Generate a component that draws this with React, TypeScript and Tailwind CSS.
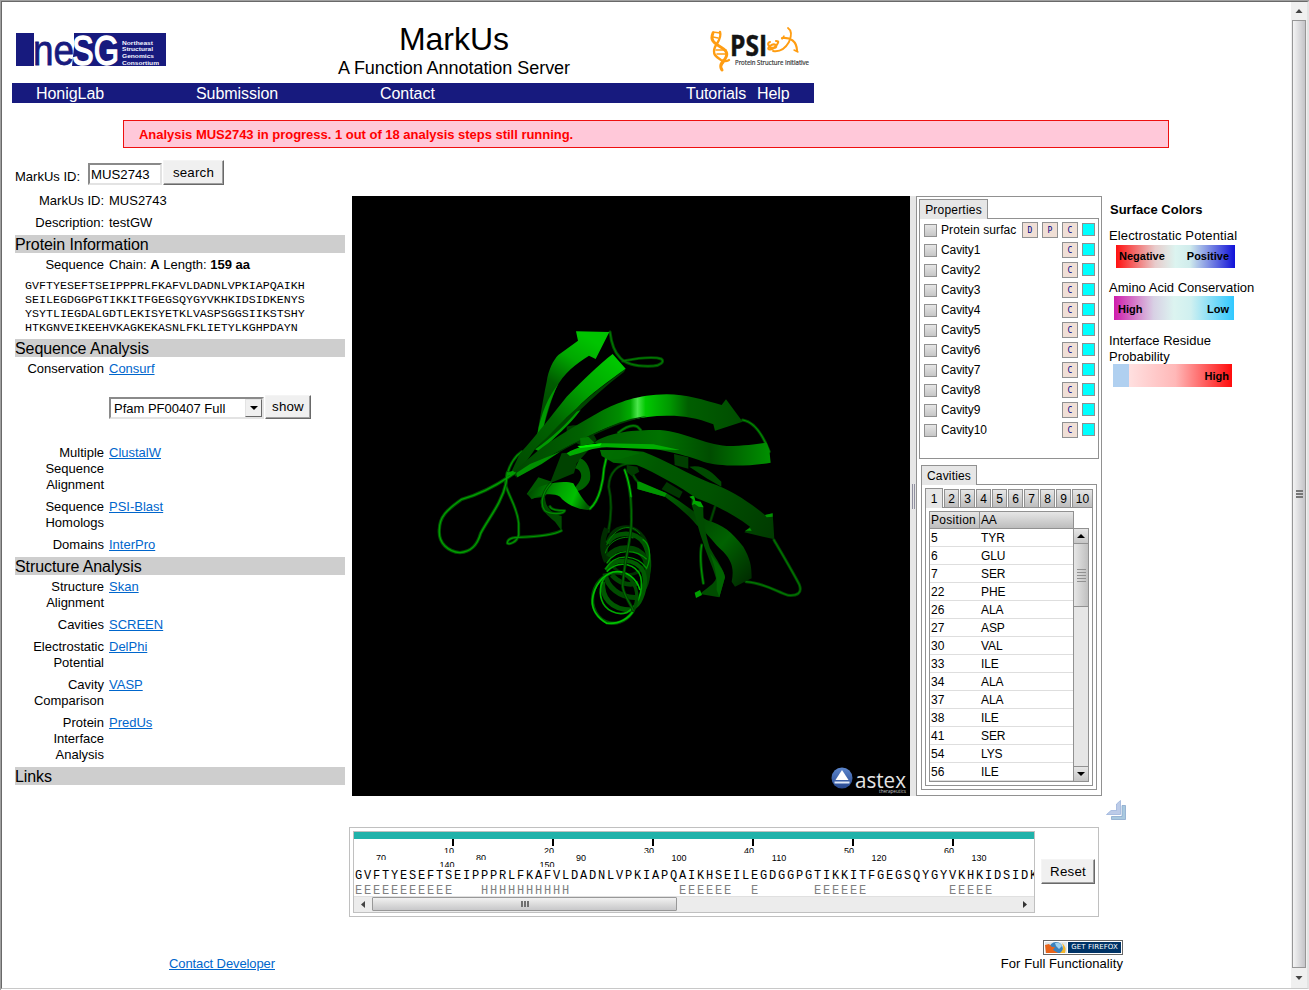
import React from "react";

const cavities = Array.from({ length: 10 }, (_, i) => i + 1);

const residues: [number, string][] = [
  [5, "TYR"], [6, "GLU"], [7, "SER"], [22, "PHE"], [26, "ALA"], [27, "ASP"], [30, "VAL"],
  [33, "ILE"], [34, "ALA"], [37, "ALA"], [38, "ILE"], [41, "SER"], [54, "LYS"], [56, "ILE"],
];

const SEQUENCE = "GVFTYESEFTSEIPPPRLFKAFVLDADNLVPKIAPQAIKHSEILEGDGGPGTIKKITFGEGSQYGYVKHKIDSIDK";
const SECONDARY =
  "E".repeat(11) + " ".repeat(3) + "H".repeat(10) + " ".repeat(12) + "E".repeat(6) + " ".repeat(2) +
  "E" + " ".repeat(6) + "E".repeat(6) + " ".repeat(9) + "E".repeat(5);

function Heading({ children }: { children: React.ReactNode }) {
  return <h2 className="h-[18px] bg-[#cecece] text-[16px] leading-[19px] tracking-[-0.08px]">{children}</h2>;
}

function Row({ label, children }: { label: string[]; children: React.ReactNode }) {
  return (
    <div className="flex gap-[5px] pt-1 pb-[2px] leading-4">
      <div className="w-[89px] text-right">
        {label.map((l) => (
          <div key={l} className="whitespace-nowrap">{l}</div>
        ))}
      </div>
      <div>{children}</div>
    </div>
  );
}

function Link({ children }: { children: React.ReactNode }) {
  return <a className="text-[#0066cc] underline">{children}</a>;
}

function Button({ children, className }: { children: React.ReactNode; className: string }) {
  return (
    <button
      className={
        "border border-t-[#f4f4f4] border-l-[#f4f4f4] border-r-[#696969] border-b-[#696969] bg-[#f0f0f0] text-[13.33px] tracking-[0.2px] shadow-[inset_-1px_-1px_0_#a0a0a0] " +
        className
      }
    >
      {children}
    </button>
  );
}

function NesgLogo() {
  return (
    <svg width="150" height="33" viewBox="0 0 150 33" className="block">
      <rect width="150" height="33" fill="#171a7e" />
      <path d="M18 0H58V14L56 33H18Z" fill="#fff" />
      <g fontFamily="Liberation Sans, sans-serif">
        <text x="17" y="32" fontSize="43" fill="#171a7e" stroke="#171a7e" strokeWidth="0.8" textLength="41" lengthAdjust="spacingAndGlyphs">ne</text>
        <text x="56" y="31.5" fontSize="43" fill="#fff" stroke="#fff" strokeWidth="1.4" textLength="47" lengthAdjust="spacingAndGlyphs">SG</text>
      </g>
      <g fontFamily="Liberation Sans, sans-serif" fontSize="6" fontWeight="bold" fill="#f4f4ff">
        <text x="106" y="11.5" textLength="31" lengthAdjust="spacingAndGlyphs">Northeast</text>
        <text x="106" y="18.3" textLength="31" lengthAdjust="spacingAndGlyphs">Structural</text>
        <text x="106" y="25" textLength="32" lengthAdjust="spacingAndGlyphs">Genomics</text>
        <text x="106" y="31.7" textLength="37" lengthAdjust="spacingAndGlyphs">Consortium</text>
      </g>
    </svg>
  );
}

function PsiLogo() {
  return (
    <svg width="102" height="48" viewBox="708 26 102 48" className="block">
      <g fill="none" stroke="#ff9d12" strokeLinecap="round">
        <path d="M713 33C710 40 714 43 719 46C726 50 729 53 725 59C722 62 719 65 722 70" strokeWidth="3" />
        <path d="M720 32C722 38 717 43 715 47C712 54 716 57 721 60C726 62 728 61 729 60" strokeWidth="2.4" />
        <path d="M713 32L720 33M713 37L718 38M716 50L726 50M717 54L726 54M721 66L724 62" strokeWidth="1.5" />
        <path d="M770 42C766 43 769 48 774 48C779 47 775 42 770 46C765 50 772 51 776 46C779 42 779 41 776 41" strokeWidth="2.1" />
        <path d="M788 28C791 30 792 35 789 42C785 49 779 52 773 51" strokeWidth="1.9" />
        <path d="M782 38C790 37 797 41 797 51" strokeWidth="2.2" />
        <path d="M782 39L784 36M794 50L798 52" strokeWidth="1.4" />
      </g>
      <text x="730" y="56" fontFamily="Open Sans, sans-serif" fontSize="28" fontWeight="bold" fill="#141414" stroke="#141414" strokeWidth="0.5" textLength="37" lengthAdjust="spacingAndGlyphs">PSI</text>
      <text x="735" y="64.500" fontFamily="Open Sans, sans-serif" fontSize="7" fill="#333" stroke="#333" strokeWidth="0.2" textLength="74" lengthAdjust="spacingAndGlyphs">Protein Structure Initiative</text>
    </svg>
  );
}

function Tube({ d, w = 9, dark = "#004a00", light = "#009400" }: { d: string; w?: number; dark?: string; light?: string }) {
  return (
    <g fill="none" strokeLinecap="round" strokeLinejoin="round">
      <path d={d} stroke={dark} strokeWidth={w} />
      <path d={d} stroke={light} strokeWidth={w * 0.4} />
    </g>
  );
}

function Molecule() {
  return (
    <svg width="558" height="600" viewBox="352 196 558 600" className="block">
      <defs>
        <linearGradient id="s1" gradientUnits="userSpaceOnUse" x1="360" y1="300" x2="500" y2="80">
          <stop offset="0" stopColor="#004a00" /><stop offset=".35" stopColor="#005c00" /><stop offset=".7" stopColor="#00a800" /><stop offset="1" stopColor="#00c400" />
        </linearGradient>
        <linearGradient id="s2" gradientUnits="userSpaceOnUse" x1="300" y1="470" x2="590" y2="150">
          <stop offset="0" stopColor="#004c00" /><stop offset=".4" stopColor="#006400" /><stop offset=".7" stopColor="#00a400" /><stop offset="1" stopColor="#00c800" />
        </linearGradient>
        <linearGradient id="s3" gradientUnits="userSpaceOnUse" x1="280" y1="0" x2="970" y2="0">
          <stop offset="0" stopColor="#004600" /><stop offset=".3" stopColor="#006200" /><stop offset=".46" stopColor="#008c00" /><stop offset=".51" stopColor="#00ac00" /><stop offset=".54" stopColor="#4be64b" /><stop offset=".575" stopColor="#00c800" /><stop offset=".68" stopColor="#009800" /><stop offset=".76" stopColor="#005e00" /><stop offset="1" stopColor="#004c00" />
        </linearGradient>
        <linearGradient id="s4" gradientUnits="userSpaceOnUse" x1="540" y1="0" x2="1050" y2="0">
          <stop offset="0" stopColor="#005c00" /><stop offset=".35" stopColor="#007200" /><stop offset=".65" stopColor="#004c00" /><stop offset="1" stopColor="#009000" />
        </linearGradient>
        <linearGradient id="s5" gradientUnits="userSpaceOnUse" x1="0" y1="240" x2="522" y2="500">
          <stop offset="0" stopColor="#007000" /><stop offset=".3" stopColor="#005800" /><stop offset=".6" stopColor="#005200" /><stop offset="1" stopColor="#003a00" />
        </linearGradient>
        <linearGradient id="s6" gradientUnits="userSpaceOnUse" x1="110" y1="340" x2="440" y2="640">
          <stop offset="0" stopColor="#008000" /><stop offset=".4" stopColor="#004000" /><stop offset=".7" stopColor="#006200" /><stop offset="1" stopColor="#002c00" />
        </linearGradient>
        <linearGradient id="hx" gradientUnits="userSpaceOnUse" x1="330" y1="520" x2="500" y2="590">
          <stop offset="0" stopColor="#004400" /><stop offset=".5" stopColor="#00a400" /><stop offset=".75" stopColor="#00c000" /><stop offset="1" stopColor="#005800" />
        </linearGradient>
        <linearGradient id="badge" x1="0" y1="0" x2="0" y2="1">
          <stop offset="0" stopColor="#5c86cc" /><stop offset="1" stopColor="#27488f" />
        </linearGradient>
      </defs>
      <rect x="352" y="196" width="558" height="600" fill="#000" />

      <g transform="translate(420 310) scale(0.33333)">
        {/* loops behind the sheets */}
        <Tube d="M570,66C574,100 582,125 600,143C620,165 660,170 700,168C720,167 735,155 724,147C700,138 645,146 608,153" light="#007a00" />
        <Tube d="M305,425C275,445 262,480 256,520C265,560 292,590 296,640L296,675C290,698 268,704 262,700C262,684 278,682 296,682C350,680 400,676 424,662" />
        <Tube d="M595,368C620,348 640,344 652,350L662,360" light="#008000" />
        <Tube d="M640,460C590,460 568,490 566,530C578,580 574,620 565,665" light="#005800" dark="#003000" />
        <Tube d="M968,330C1000,335 1025,365 1048,425" light="#008c00" />
        <Tube d="M1062,690C1085,730 1115,780 1138,824C1148,850 1130,858 1105,856C1070,845 1030,818 978,815" dark="#004400" light="#007600" />
        <Tube d="M845,705C838,740 845,790 850,820" />
        <Tube d="M885,590L872,632" light="#004c00" dark="#002c00" />
        <Tube d="M635,480C640,505 655,520 670,528" light="#005c00" dark="#003800" />

        {/* inner helix turn */}
        <path d="M440,350C470,340 510,345 530,390L500,415L440,385Z" fill="#003c00" />
        <path d="M425,430L480,425L515,410L470,460L462,490L390,520Z" fill="#004200" />
        <path d="M480,445C500,450 515,480 510,510C500,535 480,545 455,545L475,520C490,500 485,480 465,475Z" fill="#006200" />
        <path d="M355,502L395,515L375,560L340,565L320,552Z" fill="#005a00" />
        <path d="M322,552C360,520 430,510 460,520C475,545 490,575 512,592L505,600C470,598 435,580 420,560C395,545 355,555 335,568Z" fill="url(#hx)" />
        <path d="M375,560C375,590 395,612 425,618L425,662L405,635C385,618 360,600 362,570Z" fill="#004c00" />
        <Tube d="M392,520C365,550 360,585 375,602C395,615 430,612 434,602C415,602 395,600 390,590" light="#008c00" />
        <Tube d="M510,596C540,570 550,510 552,475L560,440" dark="#006400" light="#00c800" />

        {/* strand one */}
        <path d="M468,64L568,66L527,147L507,137C470,160 430,190 408,235C392,275 378,325 368,365L350,380C358,340 368,270 380,215C385,180 400,150 415,135L474,92Z" fill="url(#s1)" />
        <path d="M415,222C385,260 362,310 352,375L368,362C378,315 392,265 415,222Z" fill="#009800" />
        {/* strand two */}
        <path d="M350,415L385,375C440,325 490,270 560,220L617,176L612,186C540,240 470,310 430,350L358,425Z" fill="#004400" />
        <path d="M272,490L300,430C350,375 400,310 440,260C490,210 535,165 578,132L617,176C570,210 510,252 470,295C430,330 395,370 345,418L290,495Z" fill="url(#s2)" />
        <path d="M345,418C400,380 440,340 470,305L482,300C450,345 400,385 360,425Z" fill="#009a00" />
        {/* strand three */}
        <path d="M276,488L350,425C400,385 470,345 540,305C600,275 650,255 740,253C800,253 850,270 905,285L918,268L968,335L885,362L880,343C830,322 780,316 740,317C660,318 600,335 540,362C460,400 380,440 288,500Z" fill="url(#s3)" />
        <path d="M288,500C380,440 460,398 540,362C600,335 640,322 680,319L640,330C590,343 540,366 500,385C420,420 350,470 290,503Z" fill="#003a00" />
        <path d="M288,490L330,462L420,425L365,462L292,502Z" fill="#009000" />
        {/* strand four */}
        <path d="M522,398C560,368 640,358 720,360C800,368 850,402 920,408C980,408 1010,402 1040,398L1048,420L1052,458C980,470 900,470 850,455C780,430 700,408 540,402Z" fill="url(#s4)" />
        <path d="M440,430C470,410 520,398 560,400L700,403L780,420L700,418L560,412C520,412 490,428 450,438Z" fill="#00ae00" />
        <path d="M472,408L545,400L540,408L480,414Z" fill="#00f000" />
        <path d="M480,385L505,380L525,400L482,408Z" fill="#007800" />

        <g transform="translate(540 180)">
          <path d="M222,252L265,262L265,296L224,285Z" fill="#003e00" />
          <path d="M268,290C310,282 335,305 364,335L364,350L320,325Z" fill="#004a00" />
          <path d="M80,285L112,290L118,305L95,318L80,305Z" fill="#003c00" />
          {/* strand six */}
          <path d="M112,335L200,370C240,392 280,425 320,450C370,465 395,485 430,530C450,565 455,585 455,625L405,650L395,635C402,600 398,575 370,545C340,520 330,495 290,465C265,435 235,410 195,380L115,358Z" fill="url(#s6)" />
          <path d="M112,335L120,335L200,370L194,380L112,357Z" fill="#009400" />
          <path d="M200,336L248,365L238,385L185,358Z" fill="#003600" />
          {/* strand seven */}
          <path d="M275,385L310,412C308,460 322,510 330,535C350,570 372,600 375,622L358,682L300,672C320,655 345,640 348,625C335,580 318,550 310,520C295,480 288,440 275,405Z" fill="#004c00" />
          <path d="M330,550C352,580 372,600 375,622L358,682L350,660C352,620 345,590 330,550Z" fill="#006400" />
          <path d="M268,380L282,376L286,392L302,395L311,412L296,410L284,402L276,405L280,390Z" fill="#00a800" />
          <path d="M284,668L300,660L306,675L288,684Z" fill="#00a000" />
          {/* strand five */}
          <path d="M0,240L75,240L130,245C200,272 260,310 330,338C390,358 440,390 495,435L518,430L523,508L433,487L450,470C400,432 350,408 290,385C240,350 170,310 110,285L40,278L5,258Z" fill="url(#s5)" />
          <path d="M0,240L95,242L120,250L60,268L25,268Z" fill="#006e00" opacity=".7" />
          <path d="M495,435L518,430L518,440L500,442ZM435,482L450,474L455,482Z" fill="#009000" />
        </g>

        {/* main helix */}
        <g fill="none">
          <path d="M560,655C545,690 543,720 560,755" stroke="#002c00" strokeWidth="16" />
          <ellipse cx="622" cy="722" rx="62" ry="72" stroke="#003000" strokeWidth="9" transform="rotate(-15 622 722)" />
          <path d="M562,700C590,660 650,665 672,700C690,730 690,780 680,800" stroke="#005400" strokeWidth="14" />
          <path d="M565,740C590,705 655,705 675,745C690,780 680,820 670,835" stroke="#004600" strokeWidth="17" />
          <path d="M558,780C585,740 650,745 670,785C685,830 660,880 645,890" stroke="#005c00" strokeWidth="13" />
          <path d="M555,790C560,830 600,865 650,862" stroke="#004c00" strokeWidth="15" />
          <path d="M575,795C600,820 620,828 655,820" stroke="#004a00" strokeWidth="14" />
          <path d="M548,815C545,860 570,900 635,900" stroke="#005800" strokeWidth="15" />
          <path d="M560,705C585,648 635,638 660,672" stroke="#007600" strokeWidth="3" />
          <path d="M556,730C566,690 610,676 640,684" stroke="#008400" strokeWidth="3" />
          <path d="M556,778C590,720 655,740 680,775C695,740 690,700 668,688M560,760C590,712 650,718 680,748" stroke="#009400" strokeWidth="4" />
          <path d="M560,785C600,745 650,765 662,800C672,850 650,890 620,908C590,918 555,900 545,870C535,840 545,810 560,795" stroke="#00a800" strokeWidth="5" />
          <ellipse cx="584" cy="864" rx="66" ry="76" stroke="#004e00" strokeWidth="10" transform="rotate(12 584 864)" />
          <path d="M642,900C620,935 590,942 560,940C535,925 515,900 517,870C522,825 550,795 580,786C620,780 650,805 660,840" stroke="#00c000" strokeWidth="5" />
        </g>
        <Tube d="M615,480C628,520 635,560 634,620C638,680 612,745 608,830C612,860 632,880 640,902" dark="#003c00" light="#007000" />
        <Tube d="M614,480C624,505 630,535 633,560" dark="#006000" light="#00d000" w={8} />

        {/* left hand loop */}
        <Tube d="M285,488C240,520 190,550 125,568C80,600 58,620 58,660C55,700 85,725 120,728C155,725 172,705 182,670C205,625 245,580 258,520L262,488" dark="#005000" light="#00a000" w={10} />
        <path d="M260,488L280,482L284,492L262,498Z" fill="#009c00" />
      </g>

      <circle cx="842" cy="778" r="10.500" fill="url(#badge)" />
      <path d="M842 770L848.5 780H835.500Z" fill="#fff" />
      <path d="M834.500 782.500H849.500" stroke="#dfe8f8" strokeWidth="2" />
      <text x="855" y="788" fontFamily="Open Sans, sans-serif" fontSize="22.500" fill="#e4e4e4" textLength="51" lengthAdjust="spacingAndGlyphs">astex</text>
      <text x="879" y="793" fontFamily="Open Sans, sans-serif" fontSize="5" fill="#c4c4c4" textLength="27" lengthAdjust="spacingAndGlyphs">therapeutics</text>
    </svg>
  );
}

function Square({ children }: { children: string }) {
  return (
    <span className="flex h-4 w-4 items-center justify-center border border-[#919191] bg-[#f0dfd6] pt-[2px] font-['DejaVu_Sans_Mono',monospace] text-[8px] leading-none text-[#000080]">
      {children}
    </span>
  );
}

function PropertyRow({ name, extra }: { name: string; extra?: boolean }) {
  return (
    <div className="flex h-5 items-center pr-[3px] pl-1">
      <span className="mt-px h-[13px] w-[13px] border border-[#919191] bg-linear-to-b from-[#e6e6e6] to-[#c6c6c6]" />
      <span className={"ml-1 flex-1 overflow-hidden text-[12px] whitespace-nowrap " + (extra ? "tracking-[0.1px]" : "tracking-[-0.1px]")}>{name}</span>
      <span className="mr-1 flex gap-1">
        {extra && <Square>D</Square>}
        {extra && <Square>P</Square>}
        <Square>C</Square>
      </span>
      <span className="mb-px h-[13px] w-[13px] border border-[#919191] bg-[#00ffff]" />
    </div>
  );
}

function PropertiesPanel() {
  return (
    <section className="h-[261px]">
      <div className="relative z-10 flex h-5 w-[69px] items-center justify-center border border-b-0 border-[#919191] bg-[#e6e6e6] text-[12px] tracking-[0.2px]">
        Properties
      </div>
      <div className="-mt-px h-[241px] w-[180px] border border-[#919191] bg-white pt-px">
        <PropertyRow name="Protein surfac" extra />
        {cavities.map((n) => (
          <PropertyRow key={n} name={"Cavity" + n} />
        ))}
      </div>
    </section>
  );
}

function Arrow({ up }: { up?: boolean }) {
  return (
    <svg width="8" height="4" viewBox="0 0 8 4">
      <path d={up ? "M0 4L4 0L8 4Z" : "M0 0L4 4L8 0Z"} fill="#000" />
    </svg>
  );
}

function CavitiesPanel() {
  return (
    <section className="pt-[5px] text-[12px]">
      <div className="relative z-10 ml-[2px] flex h-5 w-[56px] items-center justify-center border border-b-0 border-[#919191] bg-[#e6e6e6] tracking-[0.15px]">
        Cavities
      </div>
      <div className="-mt-px ml-[2px] h-[306px] w-[176px] border border-[#919191] px-[3px] pt-[3px]">
        <div className="flex h-[20px] w-[168px] gap-px">
          {cavities.map((n) => (
            <span
              key={n}
              className={
                "flex shrink-0 items-center justify-center border border-[#919191] " +
                (n === 1
                  ? "h-[20px] w-[18px] border-b-0 bg-[#e6e6e6]"
                  : n === 10
                    ? "mt-px h-[19px] w-[21px] bg-linear-to-b from-[#e6e6e6] to-[#bdbdbd]"
                    : "mt-px h-[19px] w-[15px] bg-linear-to-b from-[#e6e6e6] to-[#bdbdbd]")
              }
            >
              {n}
            </span>
          ))}
        </div>
        <div className="-mt-px h-[279px] w-[168px] border border-[#919191] px-[3px] pt-[3px]">
          <div className="flex h-[18px] w-[145px] border border-[#919191] bg-linear-to-b from-[#e6e6e6] to-[#bdbdbd] leading-[17px]">
            <span className="w-[50px] border-r border-[#919191] pl-px tracking-[0.3px]">Position</span>
            <span className="pl-px tracking-[-0.3px]">AA</span>
          </div>
          <div className="-mt-px flex h-[254px] w-[160px] border border-[#919191]">
            <div className="flex-1 overflow-hidden">
              {residues.map(([pos, aa]) => (
                <div key={pos} className="flex h-[18px] border-b border-[#dedede] leading-[18px]">
                  <span className="w-[50px] pl-px">{pos}</span>
                  <span className="pl-px tracking-[-0.1px]">{aa}</span>
                </div>
              ))}
            </div>
            <div className="flex w-[15px] flex-col border-l border-[#919191] bg-[#e6e6e6]">
              <span className="flex h-[15px] items-center justify-center border-b border-[#919191] bg-linear-to-b from-[#e6e6e6] to-[#c6c6c6]">
                <Arrow up />
              </span>
              <span className="flex h-[63px] flex-col items-center justify-center gap-[2px] border-b border-[#919191] bg-linear-to-r from-[#e6e6e6] to-[#c0c0c0]">
                {[0, 1, 2, 3, 4].map((i) => (
                  <i key={i} className="h-px w-[9px] bg-[#919191]" />
                ))}
              </span>
              <span className="mt-auto flex h-[15px] items-center justify-center border-t border-[#919191] bg-linear-to-b from-[#e6e6e6] to-[#c6c6c6]">
                <Arrow />
              </span>
            </div>
          </div>
        </div>
      </div>
    </section>
  );
}

function SurfaceColors() {
  return (
    <aside className="ml-[7px] w-[160px] pt-[5px] text-[13px]">
      <h3 className="ml-px h-[27px] leading-[18px] font-bold">Surface Colors</h3>
      <p className="h-[17px] leading-4 tracking-[0.14px]">Electrostatic Potential</p>
      <div className="ml-[7px] flex h-[23px] w-[119px] items-center justify-between bg-[linear-gradient(90deg,#ff1010,#e8cccc_33%,#dcf4f0_50%,#d0ecec_62%,#1010d8)] pr-[6px] pl-[3px] text-[11px] font-bold">
        <span>Negative</span>
        <span>Positive</span>
      </div>
      <p className="mt-[12px] h-[16px] leading-4">Amino Acid Conservation</p>
      <div className="ml-[5px] flex h-[24px] w-[120px] items-center justify-between bg-[linear-gradient(90deg,#d01cac,#d8d0e4_33%,#dcf4f0_50%,#d0f0f0_64%,#30c8ff)] pt-[2px] pr-[5px] pl-[4px] text-[11px] font-bold">
        <span>High</span>
        <span>Low</span>
      </div>
      <p className="mt-[13px] h-[31px] leading-4">Interface Residue<br />Probability</p>
      <div className="ml-[4px] flex h-[23px] w-[119px] items-center">
        <span className="h-full w-4 bg-[#b0d0f0]" />
        <span className="flex h-full flex-1 items-center justify-end bg-[linear-gradient(90deg,#ffe0e0,#ffb8b8_45%,#ff0c0c)] pt-[2px] pr-[3px] text-[11px] font-bold">
          High
        </span>
      </div>
    </aside>
  );
}

function RulerLabel({ text, x, y, clipped }: { text: string; x: number; y: number; clipped?: boolean }) {
  return (
    <span
      className={
        "absolute w-6 overflow-hidden text-center text-[9px] leading-[9px] " + (clipped ? "h-[6px]" : "h-[9px]")
      }
      style={{ left: x - 354 - 12, top: y - 832 }}
    >
      {text}
    </span>
  );
}

function SequenceViewer() {
  return (
    <div className="flex h-[90px] w-[750px] border border-[#c0c0c0] pt-[3px] pl-[3px]">
      <div className="h-[82px] w-[682px] overflow-hidden border border-[#c0c0c0]">
        <div className="relative h-[37px]">
          <div className="h-[7px] bg-[#20b2aa]" />
          {[1, 2, 3, 4, 5, 6].map((n) => (
            <React.Fragment key={n}>
              <i className="absolute top-[7px] h-[7px] w-[2px] bg-black" style={{ left: n * 100 - 2 }} />
              <RulerLabel text={String(n * 10)} x={349 + n * 100} y={847} clipped />
            </React.Fragment>
          ))}
          {[70, 80, 90, 100, 110, 120, 130].map((n, i) => (
            <RulerLabel key={n} text={String(n)} x={381 + i * 100 - (i > 2 ? 2 : 0)} y={854} clipped={n < 90} />
          ))}
          <RulerLabel text="140" x={447} y={861} clipped />
          <RulerLabel text="150" x={547} y={861} clipped />
        </div>
        <div className="h-[15px] pl-px font-['Liberation_Mono',monospace] text-[12px] leading-[15px] tracking-[1.8px] whitespace-pre">{SEQUENCE}</div>
        <div className="h-[12px] pl-px font-['Liberation_Mono',monospace] text-[12px] leading-[14px] tracking-[1.8px] whitespace-pre text-[#808080]">{SECONDARY}</div>
        <div className="flex h-[16px] items-center border-t border-[#e0e0e0] bg-[#ececec]">
          <span className="flex w-[18px] justify-center">
            <svg width="4" height="7"><path d="M4 0V7L0 3.500Z" fill="#444" /></svg>
          </span>
          <span className="-mt-px flex h-[14px] w-[305px] items-center justify-center gap-px rounded-[1px] border border-[#989898] bg-linear-to-b from-[#f2f2f2] via-[#dcdcdc] to-[#c8c8ca]">
            {[0, 1, 2].map((i) => (
              <i key={i} className="h-[6px] w-[2px] bg-[#707070]" />
            ))}
          </span>
          <span className="mr-[7px] ml-auto">
            <svg width="4" height="7" className="block"><path d="M0 0V7L4 3.500Z" fill="#333" /></svg>
          </span>
        </div>
      </div>
      <Button className="mt-[28px] ml-[6px] h-[25px] w-[54px]">Reset</Button>
    </div>
  );
}

function FirefoxBadge() {
  return (
    <span className="flex h-[15px] w-[80px] border border-[#666] bg-white p-px">
      <svg width="22" height="11" viewBox="0 0 22 11">
        <rect width="22" height="11" fill="#dfe6ea" />
        <circle cx="11" cy="7" r="7" fill="#3b82bd" />
        <path d="M10 1Q15 0 17 4L14 7L11 4Z" fill="#9ed0ee" />
        <path d="M0 3L4 2L7 5L10 5L8 8L13 11H1Z" fill="#e8641b" />
        <path d="M17 1Q22 5 20 11H15Q20 7 17 1Z" fill="#f3b62c" />
      </svg>
      <span className="ml-px flex h-[11px] flex-1 items-center justify-center bg-[#003366] font-['DejaVu_Sans',sans-serif] text-[7px] leading-none tracking-[0.1px] whitespace-nowrap text-white">
        GET FIREFOX
      </span>
    </span>
  );
}

export default function App() {
  return (
    <div className="flex h-[990px] w-[1309px] overflow-hidden border-t border-l border-[#a0a0a0] bg-white font-['Liberation_Sans',Arial,sans-serif] text-[13px] text-black">
      <div className="flex h-[988px] w-full border-t border-r-2 border-b border-l border-t-[#696969] border-r-[#e3e3e3] border-b-[#c8c8c8] border-l-[#696969]">
        <main className="flex flex-1 flex-col">
          <header className="flex h-[81px] w-[812px]">
            <div className="w-[214px] pt-[31px] pl-[14px]"><NesgLogo /></div>
            <div className="w-[476px] text-center">
              <h1 className="mt-[18px] h-[38px] text-[32px] leading-[38px]">MarkUs</h1>
              <p className="h-[20px] text-[18px] leading-[20px] tracking-[-0.04px]">A Function Annotation Server</p>
            </div>
            <div className="ml-4 pt-6"><PsiLogo /></div>
          </header>

          <nav className="ml-[10px] flex h-5 w-[802px] bg-[#171a7e] pl-6 text-[16px] leading-[21px] tracking-[-0.05px] text-white">
            <a className="w-[160px]">HonigLab</a>
            <a className="w-[184px]">Submission</a>
            <a className="w-[306px]">Contact</a>
            <a className="w-[71px]">Tutorials</a>
            <a>Help</a>
          </nav>

          <div className="mt-[17px] ml-[121px] h-[28px] w-[1046px] border border-[#ee1010] bg-[#ffc8d9] pl-[15px] text-[13px] leading-[27px] font-bold tracking-[-0.02px] text-[#ff0000]">
            Analysis MUS2743 in progress. 1 out of 18 analysis steps still running.
          </div>

          <div className="flex h-[778px]">
            <div className="ml-[13px] w-[330px] pt-[12px]">
              <div className="flex h-[29px]">
                <label className="w-[73px] pt-[9px] leading-4">MarkUs ID:</label>
                <span className="mt-[3px] h-[22px] w-[74px] border-2 border-t-[#8a8a8a] border-r-[#e3e3e3] border-b-[#e3e3e3] border-l-[#8a8a8a] pl-px text-[13.2px] leading-[19px]">MUS2743</span>
                <Button className="ml-px h-[25px] w-[61px]">search</Button>
              </div>
              <Row label={["MarkUs ID:"]}>MUS2743</Row>
              <Row label={["Description:"]}>testGW</Row>
              <div className="h-[2px]" />
              <Heading>Protein Information</Heading>
              <Row label={["Sequence"]}>Chain: <b>A</b> Length: <b>159 aa</b></Row>
              <pre className="mt-1 mb-1 pl-[10px] font-['Liberation_Mono',monospace] text-[11.67px] leading-[14px]">
                {"GVFTYESEFTSEIPPPRLFKAFVLDADNLVPKIAPQAIKH\nSEILEGDGGPGTIKKITFGEGSQYGYVKHKIDSIDKENYS\nYSYTLIEGDALGDTLEKISYETKLVASPSGGSIIKSTSHY\nHTKGNVEIKEEHVKAGKEKASNLFKLIETYLKGHPDAYN"}
              </pre>
              <Heading>Sequence Analysis</Heading>
              <Row label={["Conservation"]}><Link>Consurf</Link></Row>
              <div className="flex h-[62px] pt-[16px] pl-[94px]">
                <span className="mt-[2px] flex h-[22px] w-[155px] border-2 border-t-[#8a8a8a] border-r-[#e3e3e3] border-b-[#e3e3e3] border-l-[#8a8a8a] pl-[3px] text-[13px] leading-[19px]">
                  <span className="flex-1 whitespace-nowrap">Pfam PF00407 Full</span>
                  <span className="flex w-[17px] items-center justify-center border border-t-[#e3e3e3] border-r-[#696969] border-b-[#696969] border-l-[#e3e3e3] bg-[#f0f0f0]"><Arrow /></span>
                </span>
                <Button className="ml-[1px] h-[24px] w-[46px]">show</Button>
              </div>
              <Row label={["Multiple", "Sequence", "Alignment"]}><Link>ClustalW</Link></Row>
              <Row label={["Sequence", "Homologs"]}><Link>PSI-Blast</Link></Row>
              <Row label={["Domains"]}><Link>InterPro</Link></Row>
              <div className="h-[2px]" />
              <Heading>Structure Analysis</Heading>
              <Row label={["Structure", "Alignment"]}><Link>Skan</Link></Row>
              <Row label={["Cavities"]}><Link>SCREEN</Link></Row>
              <Row label={["Electrostatic", "Potential"]}><Link>DelPhi</Link></Row>
              <Row label={["Cavity", "Comparison"]}><Link>VASP</Link></Row>
              <Row label={["Protein", "Interface", "Analysis"]}><Link>PredUs</Link></Row>
              <div className="h-[2px]" />
              <Heading>Links</Heading>
            </div>

            <div className="ml-1 pt-[48px]">
              <div className="flex pl-[3px]">
                <Molecule />
                <div className="flex w-[6px] items-center justify-center gap-px bg-[#e6e6e6]">
                  <i className="h-[25px] w-px bg-[#9090a0]" />
                  <i className="h-[25px] w-px bg-[#9090a0]" />
                </div>
                <div className="h-[600px] w-[186px] border border-[#919191] bg-white pt-[2px] pl-[2px]">
                  <PropertiesPanel />
                  <CavitiesPanel />
                </div>
                <SurfaceColors />
              </div>
              <div className="h-[31px] pt-[4px] pl-[757px]">
                <svg width="21" height="20" viewBox="0 0 21 20">
                  <path d="M14.500 .5V14.500H.5L5 10.500H10.500V4Z" fill="#bccbe8" stroke="#94add8" strokeWidth=".7" />
                  <path d="M16 5.500H19.500V19.500H5.500V16.500H16Z" fill="#a9c9df" stroke="#7f9fc8" strokeWidth=".7" />
                </svg>
              </div>
              <SequenceViewer />
            </div>
          </div>

          <footer className="flex justify-between pt-[14px] pl-[167px]">
            <div className="pt-[16px] leading-4 tracking-[-0.1px]"><Link>Contact Developer</Link></div>
            <div className="mr-[168px] flex flex-col items-end">
              <FirefoxBadge />
              <span className="pt-px leading-4 tracking-[0.07px]">For Full Functionality</span>
            </div>
          </footer>
        </main>

        <div className="flex w-[16px] flex-col items-center bg-[#f0f0f0]">
          <svg width="16" height="18" viewBox="0 0 16 18"><path d="M4.500 11L8 7L11.500 11Z" fill="#444" /></svg>
          <div className="flex h-[948px] w-[14px] flex-col items-center justify-center gap-px border border-[#979797] bg-linear-to-r from-[#f4f4f4] via-[#dcdcde] to-[#c4c4c8]">
            {[0, 1, 2].map((i) => (
              <i key={i} className="h-[2px] w-[7px] bg-[#777]" />
            ))}
          </div>
          <svg width="16" height="18" viewBox="0 0 16 18"><path d="M4.500 8L8 12L11.500 8Z" fill="#444" /></svg>
        </div>
      </div>
    </div>
  );
}
